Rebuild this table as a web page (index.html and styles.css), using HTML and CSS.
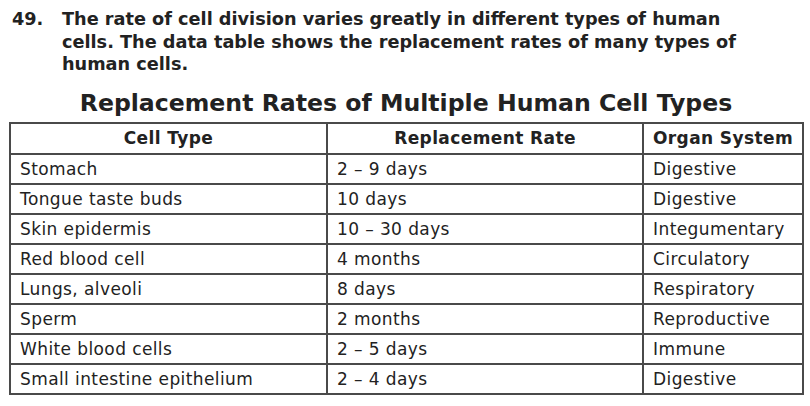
FILE: index.html
```html
<!DOCTYPE html>
<html>
<head>
<meta charset="utf-8">
<link rel="stylesheet" href="styles.css">
</head>
<body>
<div class="question">
  <div class="num">49.</div>
  <div class="qtext">The rate of cell division varies greatly in different types of human cells. The data table shows the replacement rates of many types of human cells.</div>
</div>
<h1 class="title">Replacement Rates of Multiple Human Cell Types</h1>
<table class="data">
  <colgroup>
    <col class="c1"><col class="c2"><col class="c3">
  </colgroup>
  <thead>
    <tr><th>Cell Type</th><th>Replacement Rate</th><th>Organ System</th></tr>
  </thead>
  <tbody>
    <tr><td>Stomach</td><td>2 – 9 days</td><td>Digestive</td></tr>
    <tr><td>Tongue taste buds</td><td>10 days</td><td>Digestive</td></tr>
    <tr><td>Skin epidermis</td><td>10 – 30 days</td><td>Integumentary</td></tr>
    <tr><td>Red blood cell</td><td>4 months</td><td>Circulatory</td></tr>
    <tr><td>Lungs, alveoli</td><td>8 days</td><td>Respiratory</td></tr>
    <tr><td>Sperm</td><td>2 months</td><td>Reproductive</td></tr>
    <tr><td>White blood cells</td><td>2 – 5 days</td><td>Immune</td></tr>
    <tr><td>Small intestine epithelium</td><td>2 – 4 days</td><td>Digestive</td></tr>
  </tbody>
</table>
</body>
</html>
```
FILE: styles.css
```css
html, body {
  margin: 0;
  padding: 0;
  background: #ffffff;
}
body {
  font-family: "DejaVu Sans", Verdana, sans-serif;
  color: #222222;
}
.question {
  display: flex;
  padding: 8px 0 0 12px;
  font-weight: bold;
  font-size: 17.7px;
  line-height: 22.5px;
}
.num {
  width: 50px;
  flex: none;
}
.qtext {
  width: 700px;
}
.title {
  margin: 13px 0 0 0;
  text-align: center;
  font-size: 23.6px;
  line-height: 28px;
  font-weight: bold;
  padding-left: 2px;
}
.data {
  margin: 5px 0 0 9px;
  border-collapse: collapse;
  width: 795px;
  font-size: 17px;
  letter-spacing: 0.4px;
}
.c1 { width: 318px; }
.c2 { width: 317px; }
.c3 { width: 160px; }
.data th, .data td {
  border: 2px solid #4a4a4a;
  height: 28px;
  padding: 0 0 0 9px;
  text-align: left;
  vertical-align: middle;
}
.data th {
  text-align: center;
  padding: 0;
  font-weight: bold;
  height: 29px;
}
```
